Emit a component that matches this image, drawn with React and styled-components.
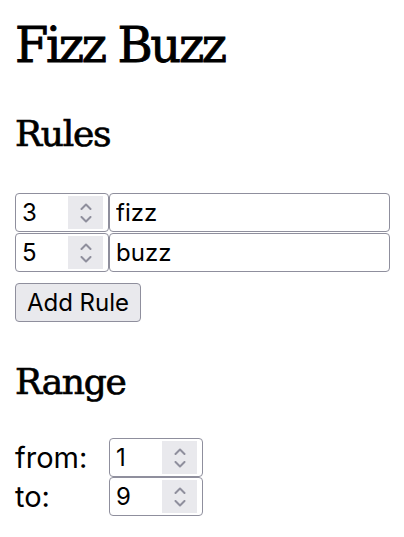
import React from "react";
import styled, { createGlobalStyle } from "styled-components";

const Global = createGlobalStyle`
  html, body { margin: 0; padding: 0; background: #fff; }
  body { font-family: Inter, "Noto Sans", sans-serif; color: #000; }
`;

const Page = styled.main`
  padding: 0 15px;
`;

const Title = styled.h1`
  font-family: "DejaVu Serif", "Liberation Serif", serif;
  font-weight: normal;
  font-size: 48px;
  line-height: 48px;
  letter-spacing: -2.4px;
  -webkit-text-stroke: 0.9px #000;
  margin: 21px 0 0;
`;

const Heading = styled.h2`
  font-family: "DejaVu Serif", "Liberation Serif", serif;
  font-weight: normal;
  font-size: 36px;
  line-height: 36px;
  letter-spacing: -1.3px;
  -webkit-text-stroke: 0.7px #000;
  margin: ${(p) => p.$top}px 0 0;
`;

const Rules = styled.div`
  margin-top: 41px;
  display: flex;
  flex-direction: column;
  gap: 1px;
`;

const RuleRow = styled.div`
  display: flex;
`;

const Box = styled.div`
  box-sizing: border-box;
  height: 39px;
  border: 1px solid #8f8f9d;
  border-radius: 4px;
  background: #fff;
  display: flex;
  align-items: center;
`;

const NumberBox = styled(Box)`
  width: 94px;
  padding: 2px 5px 2px 0;
`;

const TextBox = styled(Box)`
  width: 281px;
`;

const Field = styled.input`
  flex: 1;
  min-width: 0;
  border: 0;
  outline: none;
  background: transparent;
  font: inherit;
  font-size: 24px;
  color: #000;
  padding: 0 0 0 6px;
  height: 100%;
`;

const Spinner = styled.div`
  width: 35px;
  align-self: stretch;
  background: #e9e9ed;
  display: flex;
  flex-direction: column;
  align-items: center;
  justify-content: center;
  gap: 6px;
`;

const AddButton = styled.button`
  margin-top: 11px;
  box-sizing: border-box;
  height: 39px;
  width: 126px;
  border: 1px solid #8f8f9d;
  border-radius: 4px;
  background: #e9e9ed;
  font: inherit;
  font-size: 24px;
  color: #000;
  padding: 0;
`;

const RangeGrid = styled.div`
  margin-top: 38px;
  display: grid;
  grid-template-columns: 94px 94px;
  row-gap: 0;
  align-items: center;
`;

const Label = styled.label`
  font-size: 29px;
  line-height: 39px;
`;

const Chevron = ({ up }) => (
  <svg width="12" height="7" viewBox="0 0 12 7" fill="none">
    <path
      d={up ? "M1.5 6 L6 1.5 L10.5 6" : "M1.5 1 L6 5.5 L10.5 1"}
      stroke="#8f8f9d"
      strokeWidth="2"
      strokeLinecap="round"
      strokeLinejoin="round"
    />
  </svg>
);

const NumberInput = ({ value }) => (
  <NumberBox>
    <Field type="text" defaultValue={value} />
    <Spinner>
      <Chevron up />
      <Chevron />
    </Spinner>
  </NumberBox>
);

export default function App() {
  return (
    <>
      <Global />
      <Page>
        <Title>Fizz Buzz</Title>
        <Heading $top={47}>Rules</Heading>
        <Rules>
          <RuleRow>
            <NumberInput value="3" />
            <TextBox>
              <Field type="text" defaultValue="fizz" />
            </TextBox>
          </RuleRow>
          <RuleRow>
            <NumberInput value="5" />
            <TextBox>
              <Field type="text" defaultValue="buzz" />
            </TextBox>
          </RuleRow>
        </Rules>
        <AddButton>Add Rule</AddButton>
        <Heading $top={42}>Range</Heading>
        <RangeGrid>
          <Label>from:</Label>
          <NumberInput value="1" />
          <Label>to:</Label>
          <NumberInput value="9" />
        </RangeGrid>
      </Page>
    </>
  );
}
